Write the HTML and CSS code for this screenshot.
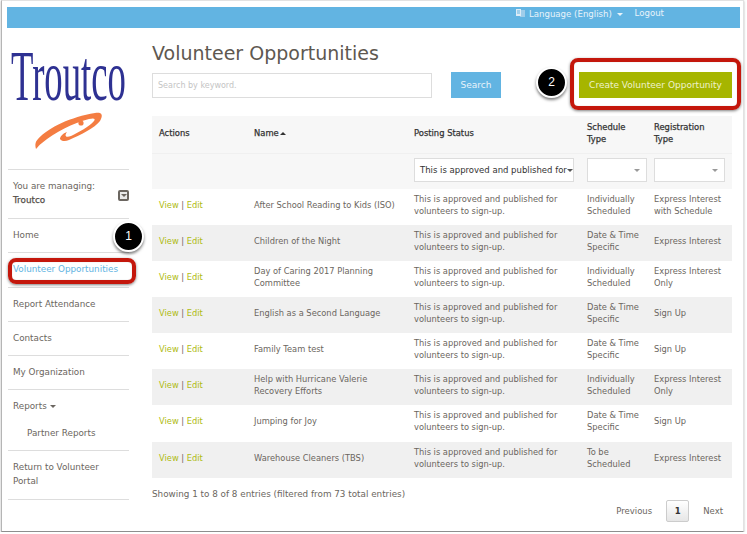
FILE: index.html
```html
<!DOCTYPE html>
<html lang="en">
<head>
    <meta charset="UTF-8">
    <meta name="viewport" content="width=device-width, initial-scale=1.0">

    <title>Volunteer Opportunities</title>

    <link rel="stylesheet" href="styles.css">

</head>

<body>

    <div class="window">

        <div class="top-bar">
            <span class="lang-link">
                <svg class="lang-icon" width="11" height="10" viewBox="0 0 11 10">
                    <path d="M1 1h5v7H1z" fill="#dcecf7"/>
                    <path d="M6 2h4v7H5V8h1z" fill="#9fcdea"/>
                    <path d="M2 3h3M2 5h3" stroke="#62b4e2" fill="none"/>
                </svg>
                Language (English)
                <span class="caret caret-white"></span>
            </span>
            <span class="logout-link">Logout</span>
        </div>

        <div class="main">

            <div class="sidebar">
                <div class="logo">
                    <div class="logo-text">Troutco</div>
                    <svg class="logo-fish" width="72" height="40" viewBox="0 0 72 40">
                        <path d="M1 37C0 33 0 30 3 27C14 15 36 5 60 1C66 0 69 2 65 9C60 16 45 23 34 28C30 30 26 29 25 27C25 24 29 21 32 20C29 24 31 26 36 24C44 20 54 15 59 9C61 6 58 6 54 7C38 11 20 20 7 31C4 33 3 35 1 37Z" fill="#f47d42"/>
                        <circle cx="46" cy="11" r="2.6" fill="#f47d42"/>
                    </svg>
                </div>

                <div class="side-item managing">
                    <div>
                        You are managing:
                        <div class="org-name">Troutco</div>
                    </div>
                    <span class="org-toggle"><span class="caret caret-dark"></span></span>
                </div>
                <div class="side-item">Home</div>
                <div class="side-item active">Volunteer Opportunities</div>
                <div class="side-item">Report Attendance</div>
                <div class="side-item">Contacts</div>
                <div class="side-item">My Organization</div>
                <div class="side-item reports">
                    Reports <span class="caret caret-dark"></span>
                    <div class="sub-item">Partner Reports</div>
                </div>
                <div class="side-item">Return to Volunteer<br>Portal</div>
            </div>

            <div class="content">
                <h1>Volunteer Opportunities</h1>

                <div class="toolbar">
                    <input class="search-box" type="text" placeholder="Search by keyword.">
                    <button class="btn-search">Search</button>
                    <button class="btn-create">Create Volunteer Opportunity</button>
                </div>

                <table class="grid">
                    <thead>
                        <tr class="head-row">
                            <th class="col-actions">Actions</th>
                            <th class="col-name">Name<span class="caret caret-up"></span></th>
                            <th class="col-status">Posting Status</th>
                            <th class="col-schedule">Schedule<br>Type</th>
                            <th class="col-reg">Registration<br>Type</th>
                        </tr>
                        <tr class="filter-row">
                            <th></th>
                            <th></th>
                            <th><div class="filter wide"><span class="filter-text">This is approved and published for</span><span class="caret caret-tiny"></span></div></th>
                            <th><div class="filter"><span class="caret caret-gray"></span></div></th>
                            <th><div class="filter"><span class="caret caret-gray"></span></div></th>
                        </tr>
                    </thead>
                    <tbody>
                        <tr>
                            <td><a>View</a> | <a>Edit</a></td>
                            <td>After School Reading to Kids (ISO)</td>
                            <td>This is approved and published for volunteers to sign-up.</td>
                            <td>Individually Scheduled</td>
                            <td>Express Interest with Schedule</td>
                        </tr>
                        <tr>
                            <td><a>View</a> | <a>Edit</a></td>
                            <td>Children of the Night</td>
                            <td>This is approved and published for volunteers to sign-up.</td>
                            <td>Date &amp; Time Specific</td>
                            <td>Express Interest</td>
                        </tr>
                        <tr>
                            <td><a>View</a> | <a>Edit</a></td>
                            <td>Day of Caring 2017 Planning Committee</td>
                            <td>This is approved and published for volunteers to sign-up.</td>
                            <td>Individually Scheduled</td>
                            <td>Express Interest Only</td>
                        </tr>
                        <tr>
                            <td><a>View</a> | <a>Edit</a></td>
                            <td>English as a Second Language</td>
                            <td>This is approved and published for volunteers to sign-up.</td>
                            <td>Date &amp; Time Specific</td>
                            <td>Sign Up</td>
                        </tr>
                        <tr>
                            <td><a>View</a> | <a>Edit</a></td>
                            <td>Family Team test</td>
                            <td>This is approved and published for volunteers to sign-up.</td>
                            <td>Date &amp; Time Specific</td>
                            <td>Sign Up</td>
                        </tr>
                        <tr>
                            <td><a>View</a> | <a>Edit</a></td>
                            <td>Help with Hurricane Valerie Recovery Efforts</td>
                            <td>This is approved and published for volunteers to sign-up.</td>
                            <td>Individually Scheduled</td>
                            <td>Express Interest Only</td>
                        </tr>
                        <tr>
                            <td><a>View</a> | <a>Edit</a></td>
                            <td>Jumping for Joy</td>
                            <td>This is approved and published for volunteers to sign-up.</td>
                            <td>Date &amp; Time Specific</td>
                            <td>Sign Up</td>
                        </tr>
                        <tr>
                            <td><a>View</a> | <a>Edit</a></td>
                            <td>Warehouse Cleaners (TBS)</td>
                            <td>This is approved and published for volunteers to sign-up.</td>
                            <td>To be Scheduled</td>
                            <td>Express Interest</td>
                        </tr>
                    </tbody>
                </table>

                <div class="entries">Showing 1 to 8 of 8 entries (filtered from 73 total entries)</div>

                <div class="pager">
                    <span>Previous</span>
                    <span class="page-current">1</span>
                    <span>Next</span>
                </div>
            </div>

        </div>

        <!-- screenshot annotations -->
        <div class="mark mark-side"></div>
        <div class="mark mark-create"></div>
        <div class="callout callout-one">1</div>
        <div class="callout callout-two">2</div>

    </div>

</body>

</html>
```

FILE: styles.css
```css
body {
    margin: 0;
    background: #ffffff;
    font-family: 'DejaVu Sans', sans-serif;
    font-size: 8.8px;
    color: #6b6660;
    overflow: hidden;
}

.window {
    position: relative;
    box-sizing: border-box;
    width: 743px;
    height: 532px;
    margin-left: 1px;
    padding: 6px 3px 0 5px;
    background: #ffffff;
    border: 1px solid #e2e2e2;
    border-left: 1px solid #b5b5b5;
    border-bottom: 1px solid #8e8e8e;
    box-shadow: 0 1px 2px rgba(0, 0, 0, 0.3);
}

.top-bar {
    display: flex;
    justify-content: flex-end;
    gap: 13px;
    box-sizing: border-box;
    height: 21px;
    padding: 1px 76px 0 0;
    background: #62b4e2;
    color: #e8f3fa;
    font-size: 8.6px;
}

.lang-icon {
    vertical-align: -1px;
}

.logout-link {
    margin-left: -1px;
}

.main {
    display: flex;
}

.sidebar {
    box-sizing: border-box;
    width: 121px;
    margin-left: 1px;
    margin-right: 23px;
}

.logo {
    position: relative;
    height: 141px;
    border-bottom: 1px solid #dddddd;
    overflow: hidden;
}

.logo-text {
    position: absolute;
    left: 3px;
    top: 12px;
    font-family: 'Liberation Serif', serif;
    font-size: 72px;
    line-height: 72px;
    color: #2e3192;
    transform: scaleX(0.51);
    transform-origin: left top;
}

.logo-fish {
    position: absolute;
    left: 27px;
    top: 84px;
}

.side-item {
    padding: 9px 4px 10.25px 5px;
    line-height: 14px;
    border-bottom: 1px solid #dddddd;
}

.managing {
    display: flex;
    justify-content: space-between;
    align-items: center;
    padding: 9px 0 11px 5px;
}

.org-name {
    color: #55504a;
    -webkit-text-stroke: 0.25px #55504a;
}

.org-toggle {
    display: flex;
    align-items: center;
    justify-content: center;
    box-sizing: border-box;
    width: 11px;
    height: 11px;
    margin-top: 4px;
    border: 2px solid #6b6660;
    border-radius: 2px;
    background: #e9e9e9;
}

.active {
    color: #62b4e2;
}

.reports {
    padding-bottom: 10px;
}

.sub-item {
    margin: 13px 0 0 14px;
}

.caret {
    display: inline-block;
    flex-shrink: 0;
    width: 0;
    height: 0;
    border-left: 3px solid transparent;
    border-right: 3px solid transparent;
    border-top: 3px solid #6b6660;
    vertical-align: 1px;
}

.caret-white {
    margin-left: 2px;
    border-top-color: #e8f3fa;
}

.caret-up {
    margin-left: 1px;
    border-top: 0;
    border-bottom: 3px solid #333333;
}

.caret-gray {
    border-top-color: #999999;
}

.caret-tiny {
    border-top-color: #555555;
}

.content {
    width: 580px;
}

h1 {
    margin: 13px 0 0;
    font-size: 19px;
    font-weight: normal;
    line-height: 24px;
    color: #5e5850;
}

.toolbar {
    display: flex;
    align-items: center;
    margin-top: 7px;
    height: 26px;
}

.search-box {
    box-sizing: border-box;
    width: 280px;
    height: 25px;
    padding: 0 5px;
    border: 1px solid #dddddd;
    font-family: inherit;
    font-size: 8px;
    outline: none;
}

.search-box::placeholder {
    color: #c4c4c4;
}

.btn-search {
    width: 50px;
    height: 26px;
    margin-left: 19px;
    border: none;
    background: #62b4e2;
    color: #e8f3fa;
    font-family: inherit;
    font-size: 9px;
}

.btn-create {
    width: 153px;
    height: 26px;
    margin-left: auto;
    border: none;
    background: #a6b500;
    color: #eef2cc;
    font-family: inherit;
    font-size: 9px;
}

.grid {
    width: 580px;
    margin-top: 18px;
    border-collapse: collapse;
    table-layout: fixed;
}

.grid th {
    padding: 0 7px 0 0;
    text-align: left;
    font-size: 8.4px;
    font-weight: normal;
    line-height: 12px;
    color: #333333;
    background: #f7f7f7;
}

.head-row {
    height: 37px;
}

.grid .head-row th {
    padding-bottom: 2px;
    -webkit-text-stroke: 0.25px #333333;
    border-bottom: 1px solid #f0f0f0;
}

.filter-row {
    height: 36px;
}

.grid .filter-row th {
    padding-bottom: 2px;
}

.grid .col-actions {
    width: 102px;
    padding-left: 7px;
    box-sizing: border-box;
}

.col-name {
    box-sizing: border-box;
    width: 160px;
}

.col-status {
    box-sizing: border-box;
    width: 173px;
}

.col-schedule {
    box-sizing: border-box;
    width: 67px;
}

.filter {
    display: flex;
    align-items: center;
    justify-content: flex-end;
    box-sizing: border-box;
    height: 24px;
    padding: 0 6px;
    border: 1px solid #dddddd;
    background: #ffffff;
}

.wide {
    justify-content: space-between;
    width: 160px;
    padding: 0 1px 0 5px;
}

.filter-text {
    font-size: 8.5px;
    white-space: nowrap;
}

.grid td {
    height: 36px;
    box-sizing: border-box;
    padding: 0 10px 5px 0;
    line-height: 12px;
    font-size: 8.3px;
}

.grid td:first-child {
    padding-left: 7px;
}

.grid tbody tr:nth-child(even) td {
    background: #f0f0f0;
}

.grid tbody tr:nth-child(7) td {
    height: 37px;
}

.grid a {
    color: #aebb10;
}

.entries {
    margin-top: 10px;
    line-height: 12px;
}

.pager {
    display: flex;
    justify-content: flex-end;
    align-items: center;
    gap: 14px;
    margin-top: 0;
    padding-right: 9px;
    font-size: 8.5px;
}

.page-current {
    display: flex;
    align-items: center;
    justify-content: center;
    width: 23px;
    height: 22px;
    border: 1px solid #cccccc;
    box-sizing: border-box;
    border-radius: 2px;
    background: linear-gradient(#ffffff, #e6e6e6);
    color: #333333;
    font-weight: bold;
}

.mark {
    position: absolute;
    box-sizing: border-box;
    border: 4px solid #c4170c;
    border-radius: 8px;
    box-shadow: 0 1px 3px rgba(0, 0, 0, 0.5), inset 0 0 1px rgba(0, 0, 0, 0.3);
}

.mark-side {
    left: 6px;
    top: 257px;
    width: 128px;
    height: 26px;
}

.mark-create {
    left: 568px;
    top: 57px;
    width: 171px;
    height: 52px;
}

.callout {
    position: absolute;
    box-sizing: border-box;
    width: 31px;
    height: 31px;
    border: 2px solid #ffffff;
    border-radius: 50%;
    background: #000000;
    color: #ffffff;
    font-family: 'Liberation Sans', sans-serif;
    font-size: 12px;
    line-height: 27px;
    text-align: center;
    box-shadow: 0 2px 3px rgba(0, 0, 0, 0.5);
}

.callout-one {
    left: 111px;
    top: 220px;
}

.callout-two {
    left: 534px;
    top: 66px;
}
```
